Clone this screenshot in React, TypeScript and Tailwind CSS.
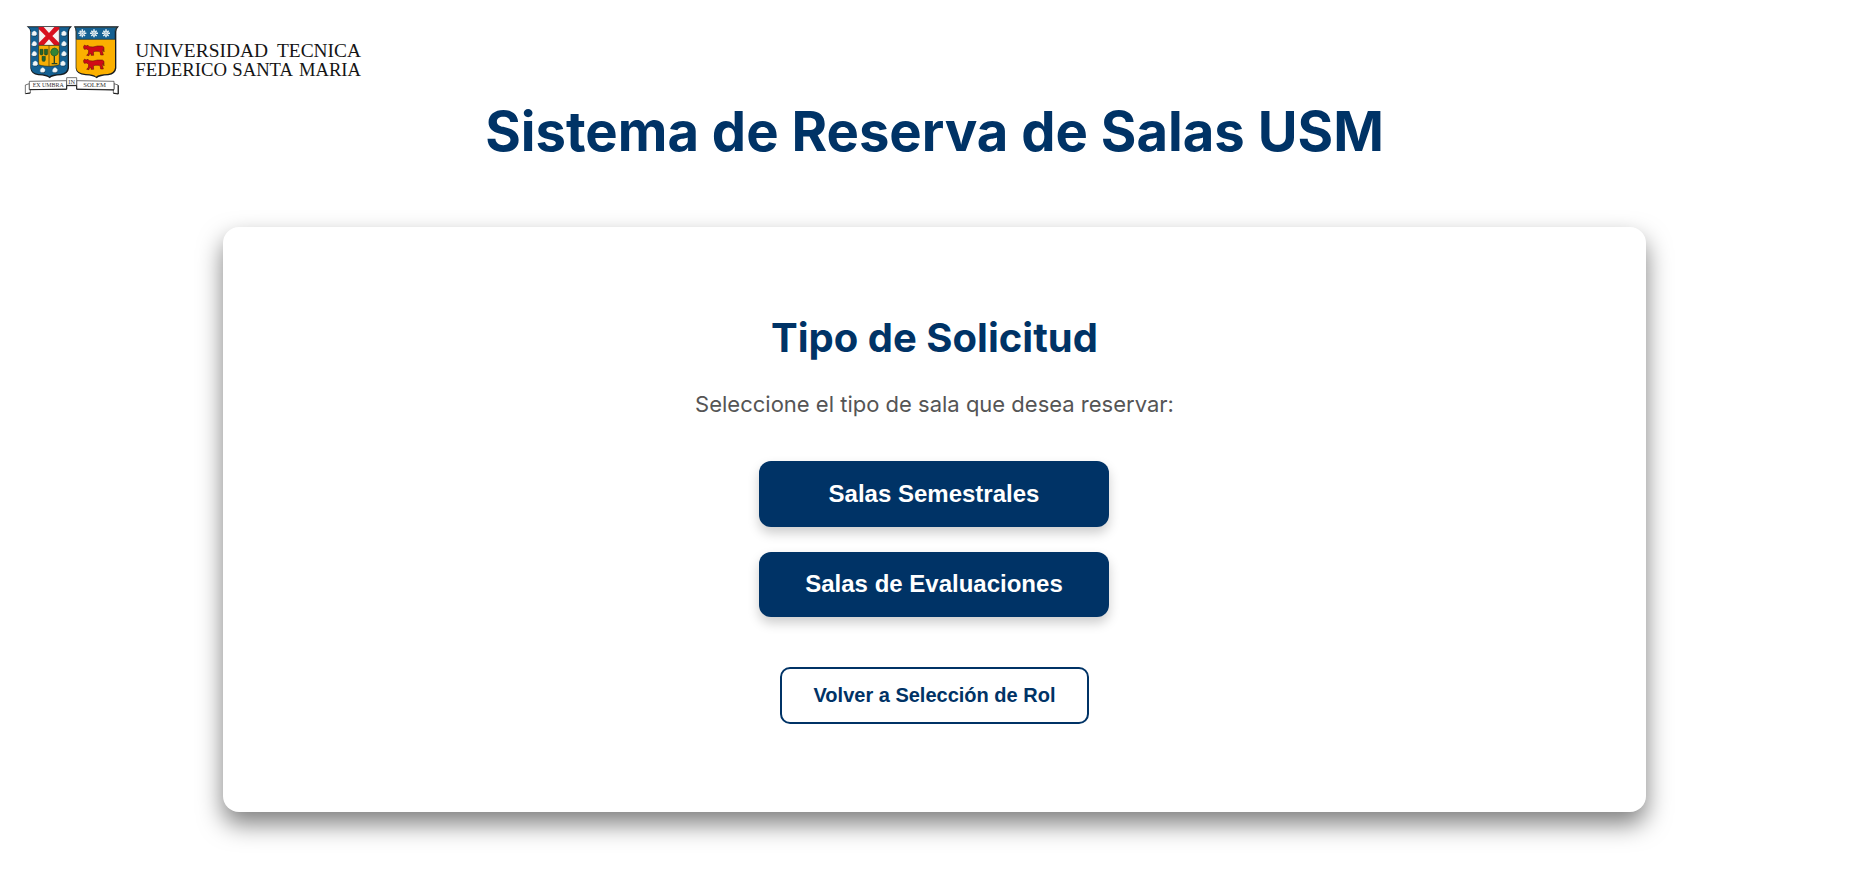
function Cow({ y }: { y: number }) {
  return (
    <path
      transform={`translate(0 ${y})`}
      d="M206 5 L209 1 L213 4 L219 2 L223 6 L234 7 L247 4 L262 4 L267 8 L267 22 L264 14 L262 20 L265 31 L257 31 L256 24 L252 20 L240 20 L235 22 L236 32 L228 32 L228 26 L223 28 L222 33 L215 32 L220 26 L221 18 L216 13 L208 14 L206 10 Z"
      fill="#d10a17"
      stroke="#5a1408"
      strokeWidth="1.6"
    />
  );
}

const SHELLS = [
  [58, 56], [58, 87], [58, 117], [61, 146], [83, 166],
  [147, 56], [147, 87], [147, 117], [144, 146], [120, 166],
];

function Logo() {
  return (
    <svg width="355" height="90" viewBox="0 0 1065 270" role="img" aria-label="Universidad Tecnica Federico Santa Maria">
      <path d="M35 34 H171 Q162 42 162 50 V160 Q160 178 138 181 Q112 182 104 190 Q96 182 70 181 Q48 178 46 160 V50 Q46 42 35 34 Z" fill="#171c20" />
      <path d="M177 34 H312 Q304 42 304 50 V160 Q302 178 280 181 Q254 182 245 190 Q236 182 212 181 Q183 178 182 160 V50 Q182 42 177 34 Z" fill="#171c20" />
      <path d="M39 37 H164 Q158 43 158 50 V158 Q156 174 136 177 Q110 178 103 185 Q96 178 70 177 Q49 174 48 158 V50 Q48 42 39 37 Z" fill="#146092" />
      <path d="M180 37 H306 Q300 42 300 50 V158 Q298 174 278 177 Q252 178 243 185 Q236 178 212 177 Q184 174 184 158 V50 Q184 42 180 37 Z" fill="#fbb000" />
      <path d="M180 37 H306 Q300 42 300 50 V73 H184 V50 Q184 42 180 37 Z" fill="#146092" stroke="#172c3c" strokeWidth="2" />

      <rect x="71" y="36" width="62" height="54" fill="#f5f2f2" />
      <path d="M71 36 H86 L102 54 L118 36 H133 V42 L112 63 L133 84 V90 H117 L102 73 L87 90 H71 V84 L92 63 L71 42 Z" fill="#d8101f" />
      <path d="M71 36 V90 M133 36 V90" stroke="#3a2830" strokeWidth="2" />
      <path d="M71 91 H133 V148 Q130 153 102 154 Q74 153 71 148 Z" fill="#f6ae05" stroke="#28301c" strokeWidth="2" />
      <path d="M102 91 V153" stroke="#3b3211" strokeWidth="2" />
      <path d="M75 103 h9 v14 l-2 3 h-5 l-2 -3 Z M88 103 h10 v14 l-2 3 h-6 l-2 -3 Z M81 124 h10 v11 l-2 4 h-6 l-2 -4 Z" fill="#23642b" stroke="#163b22" strokeWidth="1.5" />
      <path d="M118 119 V145 M110 146 H127" stroke="#23452a" strokeWidth="4" />
      <path d="M111 102 Q119 96 126 102 Q134 110 127 119 Q118 127 110 120 Q103 111 111 102 Z" fill="#328437" stroke="#205428" strokeWidth="2" />

      {SHELLS.map(([x, y]) => (
        <g key={`${x}-${y}`} transform={`translate(${x} ${y})`}>
          <path d="M-4 7 H4 L8 4" stroke="#173144" strokeWidth="3" fill="none" />
          <path d="M-6 -4 L-2 -8 H2 L7 -3 L7 3 L3 6 H-4 L-8 3 Z" fill="#f3f6f7" stroke="#9dbccd" strokeWidth="1.2" />
        </g>
      ))}

      {[202, 237, 273].map((x) => (
        <g key={x} transform={`translate(${x} 55)`} stroke="#e5eff4" strokeWidth="4.5">
          <path d="M0 -12 V12 M-12 0 H12 M-8 -8 L8 8 M8 -8 L-8 8" />
          <circle r="3.5" fill="#f5f5f5" stroke="#487f9f" strokeWidth="1.5" />
        </g>
      ))}
      <Cow y={89} />
      <Cow y={131} />

      <g stroke="#414141" strokeWidth="2.2" fill="#fff">
        <path d="M43 206 L31 210 V236 L46 234 V223 H43 Z" />
        <path d="M297 206 L309 210 V236 L295 234 V223 H297 Z" />
        <path d="M43 199 L155 197 V222 L43 224 Z" />
        <path d="M185 197 L297 199 V224 L185 222 Z" />
        <path d="M155 188 H185 V211 H155 Z" />
      </g>
      <path d="M44 224 L155 223 V212 H185 V223 L297 225 M32 236 L46 234 M295 235 L310 237 V211" fill="none" stroke="#1c1c1c" strokeWidth="3" />
      <g fill="#333" className="font-['Liberation_Serif',serif]">
        <text x="53" y="217" fontSize="19" textLength="93" lengthAdjust="spacingAndGlyphs">EX UMBRA</text>
        <text x="160" y="206" fontSize="18" textLength="20" lengthAdjust="spacingAndGlyphs">IN</text>
        <text x="205" y="217" fontSize="19" textLength="68" lengthAdjust="spacingAndGlyphs">SOLEM</text>
      </g>
      <g fill="#151515" fontSize="57" className="font-['Liberation_Serif',serif]">
        <text x="361" y="125" textLength="398" lengthAdjust="spacingAndGlyphs">UNIVERSIDAD</text>
        <text x="786" y="125" textLength="252" lengthAdjust="spacingAndGlyphs">TECNICA</text>
        <text x="361" y="182" textLength="275" lengthAdjust="spacingAndGlyphs">FEDERICO</text>
        <text x="652" y="182" textLength="182" lengthAdjust="spacingAndGlyphs">SANTA</text>
        <text x="852" y="182" textLength="186" lengthAdjust="spacingAndGlyphs">MARIA</text>
      </g>
    </svg>
  );
}

export default function App() {
  return (
    <div className="flex min-h-[885px] flex-col bg-white font-['Inter',sans-serif] text-[#003366]">
      <header className="h-[90px] pt-[15px] pl-[15px]">
        <Logo />
      </header>
      <h1 className="mt-[7px] text-center text-[54.4px] leading-[68px] font-bold">Sistema de Reserva de Salas USM</h1>
      <main className="mx-auto mt-[62px] flex h-[585px] w-[1423px] flex-col items-center rounded-2xl bg-white pt-[87px] shadow-[0_12px_24px_rgba(0,0,0,0.5)]">
        <h2 className="text-[40px] leading-[48px] font-bold">Tipo de Solicitud</h2>
        <p className="mt-[29px] text-[22px] leading-[27px] text-[#555555]">Seleccione el tipo de sala que desea reservar:</p>
        <div className="mt-[43px] mr-px flex flex-col gap-[25px] font-['Liberation_Sans',sans-serif]">
          <button className="h-[65.5px] w-[350px] rounded-xl bg-[#003366] text-2xl font-bold text-white shadow-[0_6px_12px_rgba(0,0,0,0.2)]">
            Salas Semestrales
          </button>
          <button className="h-[65.5px] w-[350px] rounded-xl bg-[#003366] text-2xl font-bold text-white shadow-[0_6px_12px_rgba(0,0,0,0.2)]">
            Salas de Evaluaciones
          </button>
        </div>
        <button className="mt-[50px] h-[57px] w-[309px] rounded-[10px] border-2 border-[#003366] bg-white pb-0.5 font-['Liberation_Sans',sans-serif] text-[20px] font-bold">
          Volver a Selección de Rol
        </button>
      </main>
    </div>
  );
}
